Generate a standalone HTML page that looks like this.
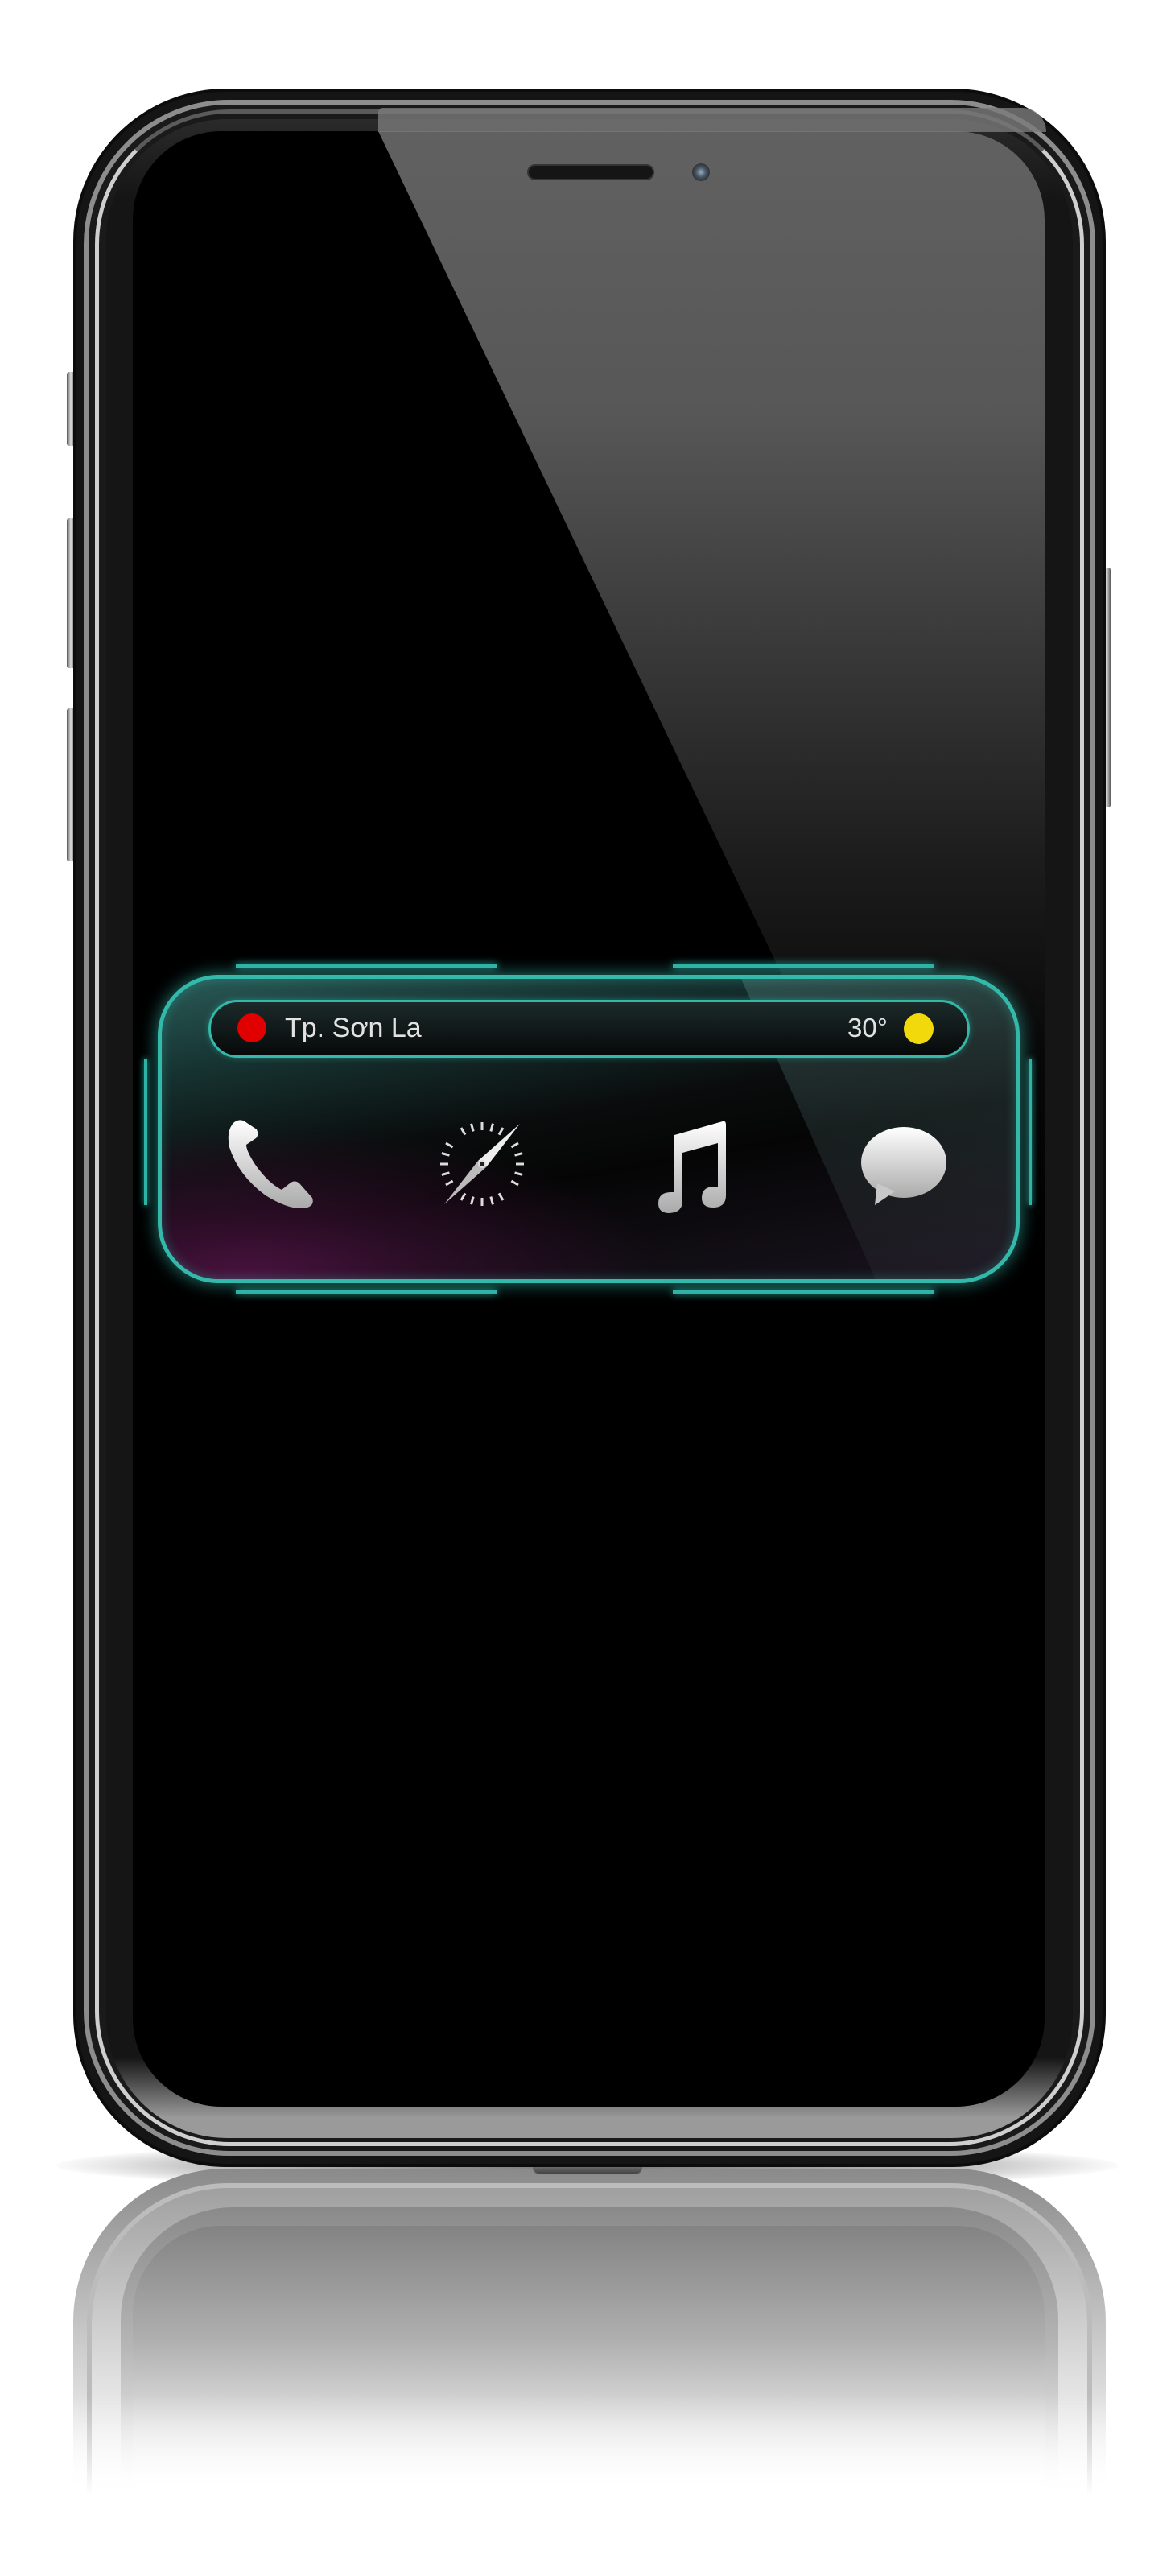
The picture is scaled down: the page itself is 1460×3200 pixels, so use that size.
<!DOCTYPE html>
<html><head><meta charset="utf-8"><style>
*{margin:0;padding:0;box-sizing:border-box}
body{width:1460px;height:3200px;background:#fff;position:relative;overflow:hidden;font-family:"Liberation Sans",sans-serif}
.abs{position:absolute}
</style></head><body>
<!-- shadow -->
<div class="abs" style="left:70px;top:2660px;width:1320px;height:60px;border-radius:50%;background:radial-gradient(ellipse at center,rgba(0,0,0,.55) 0%,rgba(0,0,0,.25) 50%,rgba(0,0,0,0) 72%)"></div>

<!-- reflection -->
<div class="abs" style="left:91px;top:2694px;width:1283px;height:420px;border-radius:190px 190px 0 0;background:linear-gradient(#8a8a8a,#cfcfcf 55%,#fff 95%)"></div>
<div class="abs" style="left:108px;top:2712px;width:1249px;height:400px;border-radius:175px 175px 0 0;border:6px solid #bcbcbc;border-bottom:none;background:linear-gradient(#a0a0a0,#e0e0e0 60%,#fff)"></div>
<div class="abs" style="left:150px;top:2742px;width:1165px;height:380px;border-radius:140px 140px 0 0;background:linear-gradient(#8a8a8a,#b5b5b5 45%,#fff 95%)"></div>
<div class="abs" style="left:165px;top:2765px;width:1133px;height:360px;border-radius:110px 110px 0 0;background:linear-gradient(#838383,#b0b0b0 40%,#e2e2e2 70%,#fff 92%)"></div>
<div class="abs" style="left:0;top:2700px;width:1460px;height:500px;background:linear-gradient(rgba(255,255,255,0) 0%,rgba(255,255,255,0) 55%,#fff 80%)"></div>
<!-- home connector -->
<div class="abs" style="left:662px;top:2685px;width:136px;height:16px;border-radius:8px;background:linear-gradient(#888,#444);border:1px solid #666"></div>

<!-- side buttons -->
<div class="abs" style="left:83px;top:462px;width:10px;height:92px;border-radius:3px;background:linear-gradient(90deg,#555,#ddd,#666)"></div>
<div class="abs" style="left:83px;top:644px;width:10px;height:186px;border-radius:3px;background:linear-gradient(90deg,#555,#ddd,#666)"></div>
<div class="abs" style="left:83px;top:880px;width:10px;height:190px;border-radius:3px;background:linear-gradient(90deg,#555,#ddd,#666)"></div>
<div class="abs" style="left:1370px;top:705px;width:10px;height:298px;border-radius:3px;background:linear-gradient(90deg,#666,#ddd,#555)"></div>

<!-- phone body -->
<div class="abs" style="left:91px;top:110px;width:1283px;height:2582px;border-radius:190px;background:#151515;border:4px solid #0c0c0c"></div>
<div class="abs" style="left:104px;top:124px;width:1257px;height:2554px;border-radius:180px;border:6px solid #8d8d8d;background:#1a1a1a"></div>
<div class="abs" style="left:118px;top:136px;width:1229px;height:2530px;border-radius:168px;border:5px solid #cfcfcf;border-top-color:#5a5a5a;background:#1a1a1a"></div>
<div class="abs" style="left:132px;top:148px;width:1201px;height:2508px;border-radius:150px;background:linear-gradient(#2a2a2a,#151515 4%,#151515 96%,#9a9a9a 99%)"></div>
<!-- screen -->
<div class="abs" style="left:165px;top:163px;width:1133px;height:2454px;border-radius:110px;background:#000;overflow:hidden">
  <div class="abs" style="left:0;top:0;width:1133px;height:1400px;clip-path:polygon(305px 0,1133px 0,1133px 1400px,975px 1400px);background:linear-gradient(#616161 0%,#575757 25%,#3a3a3a 45%,#1c1c1c 65%,#080808 82%,#000 100%)"></div>
</div>
<!-- glass top strip -->
<div class="abs" style="left:470px;top:134px;width:830px;height:30px;border-radius:14px 80px 0 0;background:#7a7a7a;opacity:.8"></div>
<!-- speaker & camera -->
<div class="abs" style="left:655px;top:204px;width:158px;height:20px;border-radius:10px;background:#151515;border:2px solid #333"></div>
<div class="abs" style="left:860px;top:203px;width:22px;height:22px;border-radius:50%;background:radial-gradient(circle,#9ab 0,#456 40%,#333 70%,#555 100%)"></div>

<!-- widget -->
<div class="abs" style="left:293px;top:1198px;width:325px;height:5px;background:#2fb3a6;box-shadow:0 0 10px #2fb3a6"></div>
<div class="abs" style="left:836px;top:1198px;width:325px;height:5px;background:#2fb3a6;box-shadow:0 0 10px #2fb3a6"></div>
<div class="abs" style="left:293px;top:1602px;width:325px;height:5px;background:#2fb3a6;box-shadow:0 0 10px #2fb3a6"></div>
<div class="abs" style="left:836px;top:1602px;width:325px;height:5px;background:#2fb3a6;box-shadow:0 0 10px #2fb3a6"></div>
<div class="abs" style="left:179px;top:1315px;width:4px;height:182px;background:#2fb3a6;box-shadow:0 0 8px #2fb3a6"></div>
<div class="abs" style="left:1278px;top:1315px;width:4px;height:182px;background:#2fb3a6;box-shadow:0 0 8px #2fb3a6"></div>

<div class="abs" style="left:196px;top:1211px;width:1071px;height:383px;border-radius:75px;border:5px solid #33b8aa;box-shadow:0 0 22px rgba(47,179,166,.7),inset 0 0 14px rgba(47,179,166,.4);background:radial-gradient(ellipse 520px 190px at 10% 100%,#4a1240 0%,rgba(60,16,52,.6) 45%,rgba(0,0,0,0) 100%),linear-gradient(170deg,#2a5a57 0%,#173533 20%,#0a0d0d 45%,#050505 60%,#1a1420 100%);overflow:hidden">
  <div class="abs" style="left:720px;top:0;width:360px;height:380px;clip-path:polygon(0 0,360px 0,360px 380px,170px 380px);background:linear-gradient(rgba(120,180,175,.25),rgba(255,255,255,.03))"></div>
</div>
<div class="abs" style="left:259px;top:1242px;width:946px;height:72px;border-radius:36px;border:3px solid #33b8aa;background:linear-gradient(#1c2a2a,#070909);box-shadow:0 0 8px rgba(47,179,166,.5)"></div>
<div class="abs" style="left:295px;top:1259px;width:36px;height:36px;border-radius:50%;background:#e00000"></div>
<div class="abs" style="left:354px;top:1258px;font-size:34px;color:#e2e2e2;line-height:38px">Tp. Sơn La</div>
<div class="abs" style="left:1053px;top:1258px;font-size:33px;color:#e2e2e2;line-height:38px">30°</div>
<div class="abs" style="left:1123px;top:1259px;width:37px;height:38px;border-radius:50%;background:#f2d90c"></div>

<svg class="abs" style="left:0;top:0" width="1460" height="1700">
<defs>
<linearGradient id="ig" x1="0" y1="0" x2="0" y2="1"><stop offset="0" stop-color="#fff"/><stop offset="1" stop-color="#aaa"/></linearGradient>
</defs>
<path d="M290 1395 Q281 1405 285 1425 Q296 1460 330 1485 Q362 1505 382 1500 Q391 1497 388 1488 L372 1470 Q366 1465 360 1470 L350 1478 Q334 1470 318 1448 Q306 1430 306 1422 L318 1414 Q322 1410 319 1403 L304 1393 Q297 1389 290 1395 Z" fill="url(#ig)"/>
<g transform="translate(599,1446)" stroke="#ddd" stroke-width="3">
<g id="tk"><line x1="0" y1="-52" x2="0" y2="-42"/></g>
<use href="#tk" transform="rotate(15)"/><use href="#tk" transform="rotate(30)"/><use href="#tk" transform="rotate(60)"/><use href="#tk" transform="rotate(75)"/><use href="#tk" transform="rotate(90)"/><use href="#tk" transform="rotate(105)"/><use href="#tk" transform="rotate(120)"/><use href="#tk" transform="rotate(150)"/><use href="#tk" transform="rotate(165)"/><use href="#tk" transform="rotate(180)"/><use href="#tk" transform="rotate(195)"/><use href="#tk" transform="rotate(210)"/><use href="#tk" transform="rotate(240)"/><use href="#tk" transform="rotate(255)"/><use href="#tk" transform="rotate(270)"/><use href="#tk" transform="rotate(285)"/><use href="#tk" transform="rotate(300)"/><use href="#tk" transform="rotate(330)"/><use href="#tk" transform="rotate(345)"/>
<path d="M47 -50 L5 4 L-5 -4 Z" fill="#eee" stroke="none"/>
<path d="M-47 50 L-5 -4 L5 4 Z" fill="#bbb" stroke="none"/>
<circle r="4" fill="#222" stroke="#ddd" stroke-width="2"/>
</g>
<path d="M838 1410 L898 1393 Q902 1392 902 1397 L902 1485 Q902 1500 886 1500 Q872 1500 872 1488 Q872 1474 888 1474 L892 1474 L892 1420 L848 1432 L848 1492 Q848 1506 832 1507 Q818 1507 818 1495 Q818 1481 834 1481 L838 1481 Z" fill="url(#ig)"/>
<ellipse cx="1123" cy="1444" rx="53" ry="44" fill="url(#ig)"/>
<path d="M1090 1470 L1087 1497 L1112 1480 Z" fill="#c8c8c8"/>
</svg>
</body></html>
